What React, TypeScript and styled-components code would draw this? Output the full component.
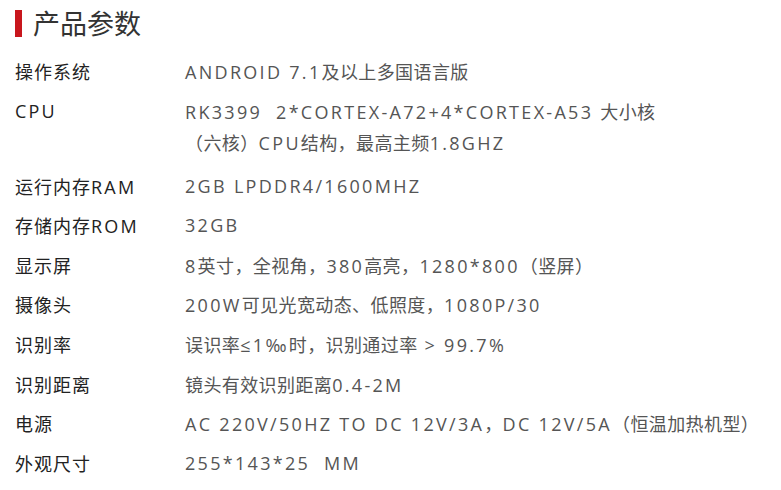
import styled, { createGlobalStyle } from 'styled-components';

const GlobalStyle = createGlobalStyle`
  html, body {
    margin: 0;
    padding: 0;
    background: #ffffff;
  }
  body {
    font-family: "Open Sans", "Noto Sans CJK SC", sans-serif;
  }
`;

const Page = styled.div`
  width: 781px;
  height: 490px;
  overflow: hidden;
  padding: 8px 0 0 15px;
  box-sizing: border-box;
`;

const Heading = styled.h2`
  display: flex;
  align-items: center;
  gap: 11px;
  margin: 0 0 14px;
  font-family: "Noto Sans CJK SC", sans-serif;
  font-size: 27px;
  font-weight: 400;
  line-height: 30px;
  color: #333;
`;

const Bar = styled.span`
  width: 7px;
  height: 27px;
  background: #c8161d;
`;

const SpecList = styled.div`
  display: flex;
  flex-direction: column;
`;

const Row = styled.div<{ $tall?: boolean }>`
  display: grid;
  grid-template-columns: 170px 1fr;
  padding: 4px 0 ${p => (p.$tall ? '9px' : '4.6px')};
  font-size: 18px;
  line-height: 31px;
`;

const Label = styled.div`
  height: 31px;
  color: #222;
  letter-spacing: 2.2px;
  white-space: nowrap;
`;

const Value = styled.div`
  color: #555;
  letter-spacing: 2.3px;
  white-space: pre;
`;

const Line = styled.div`
  height: 31px;
`;

const Cjk = styled.span<{ $gap?: number }>`
  font-family: "Noto Sans CJK SC", sans-serif;
  letter-spacing: ${p => p.$gap ?? 0}px;
`;

// latin runs keep the wide spacing, CJK runs are set tighter
const splitRuns = (text: string, gap: number) =>
  text.split(/([\u3000-\u303f\u4e00-\u9fff\uff00-\uffef、]+)/).map((part, i) =>
    i % 2 === 1 ? (
      <Cjk key={i} $gap={gap}>
        {part}
      </Cjk>
    ) : (
      part
    ),
  );

const specs: { label: string; value: string[] }[] = [
  { label: '操作系统', value: ['ANDROID 7.1及以上多国语言版'] },
  {
    label: 'CPU',
    value: ['RK3399  2*CORTEX-A72+4*CORTEX-A53 大小核', '（六核）CPU结构，最高主频1.8GHZ'],
  },
  { label: '运行内存RAM', value: ['2GB LPDDR4/1600MHZ'] },
  { label: '存储内存ROM', value: ['32GB'] },
  { label: '显示屏', value: ['8英寸，全视角，380高亮，1280*800（竖屏）'] },
  { label: '摄像头', value: ['200W可见光宽动态、低照度，1080P/30'] },
  { label: '识别率', value: ['误识率≤1‰时，识别通过率 > 99.7%'] },
  { label: '识别距离', value: ['镜头有效识别距离0.4-2M'] },
  { label: '电源', value: ['AC 220V/50HZ TO DC 12V/3A，DC 12V/5A（恒温加热机型）'] },
  { label: '外观尺寸', value: ['255*143*25  MM'] },
];

const App = () => {
  return (
    <>
      <GlobalStyle />
      <Page>
        <Heading>
          <Bar />
          产品参数
        </Heading>
        <SpecList>
          {specs.map(s => (
            <Row key={s.label} $tall={s.value.length > 1}>
              <Label>{splitRuns(s.label, 1)}</Label>
              <Value>
                {s.value.map((line, i) => (
                  <Line key={i}>{splitRuns(line, 0.4)}</Line>
                ))}
              </Value>
            </Row>
          ))}
        </SpecList>
      </Page>
    </>
  );
};

export default App;
